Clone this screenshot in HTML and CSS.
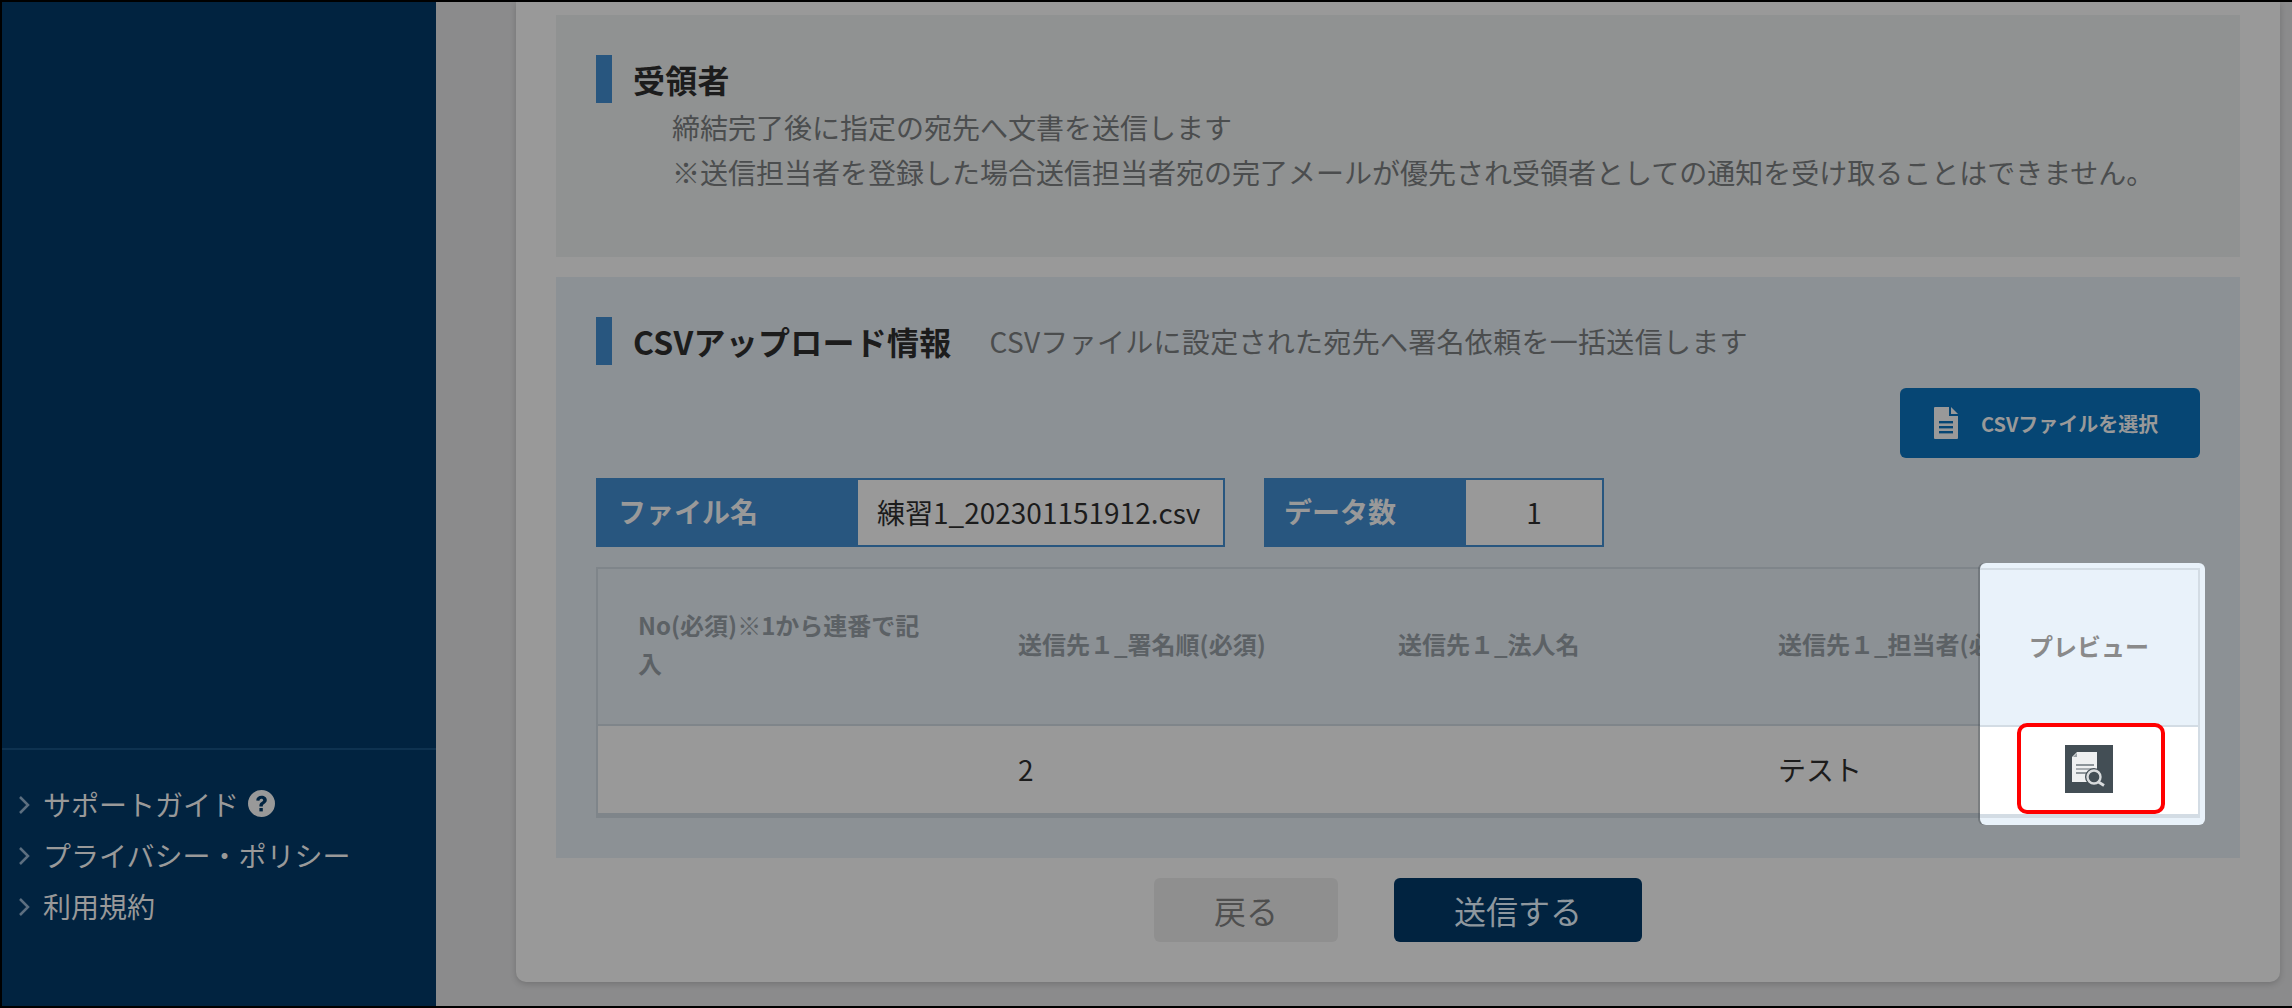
FILE: index.html
```html
<!DOCTYPE html>
<html lang="ja">
<head>
<meta charset="utf-8">
<title>CSVアップロード</title>
<link rel="stylesheet" href="styles.css">
</head>
<body>
<div class="app">
  <aside class="sidebar">
    <ul class="side-links">
      <li><svg class="chev" viewBox="0 0 12 18"><path d="M2 1l8 8-8 8"/></svg>サポートガイド<svg class="help" viewBox="0 0 27 27"><circle cx="13.5" cy="13.5" r="13.5"/><path class="help-q" d="M8.200 10.400c.3-3.200 2.500-4.700 5.400-4.700 3 0 5.200 1.800 5.200 4.400 0 3.600-4 3.600-4 5.900v.6h-3.400v-.9c0-3.500 3.800-3.700 3.800-5.400 0-.9-.8-1.500-1.800-1.500-1.100 0-1.800.8-2 2z"/><rect class="help-q" x="11.400" y="18" width="3.400" height="3.400"/></svg></li>
      <li><svg class="chev" viewBox="0 0 12 18"><path d="M2 1l8 8-8 8"/></svg>プライバシー・ポリシー</li>
      <li><svg class="chev" viewBox="0 0 12 18"><path d="M2 1l8 8-8 8"/></svg>利用規約</li>
    </ul>
  </aside>
  <main class="main">
    <div class="card">
      <section class="panel panel-plain">
        <h2 class="heading"><span class="heading-text">受領者</span></h2>
        <div class="notes">
          <p>締結完了後に指定の宛先へ文書を送信します</p>
          <p>※送信担当者を登録した場合送信担当者宛の完了メールが優先され受領者としての通知を受け取ることはできません。</p>
        </div>
      </section>
      <section class="panel panel-blue">
        <h2 class="heading"><span class="heading-text">CSVアップロード情報</span><span class="heading-desc">CSVファイルに設定された宛先へ署名依頼を一括送信します</span></h2>
        <div class="select-row">
          <button class="select-btn" type="button">
            <svg class="doc-icon" viewBox="0 0 24 32"><path d="M1 0h14v9h9v22a1 1 0 0 1-1 1H1a1 1 0 0 1-1-1V1a1 1 0 0 1 1-1z"/><path d="M17 0l7 7h-7z"/><rect class="doc-line" x="5" y="14" width="14" height="2.4"/><rect class="doc-line" x="5" y="19" width="14" height="2.4"/><rect class="doc-line" x="5" y="24" width="14" height="2.4"/></svg>
            CSVファイルを選択
          </button>
        </div>
        <div class="info-row">
          <dl class="info info-file"><dt>ファイル名</dt><dd>練習1_202301151912.csv</dd></dl>
          <dl class="info info-count"><dt>データ数</dt><dd>1</dd></dl>
        </div>
        <div class="table-wrap">
          <table class="data">
            <thead>
              <tr><th>No(必須)※1から連番で記入</th><th>送信先１_署名順(必須)</th><th>送信先１_法人名</th><th>送信先１_担当者(必須)</th><th></th></tr>
            </thead>
            <tbody>
              <tr><td></td><td>2</td><td></td><td>テスト</td><td></td></tr>
            </tbody>
          </table>
          <div class="spot">
            <div class="spot-inner">
              <div class="spot-head">プレビュー</div>
              <div class="spot-cell">
                <span class="red-box">
                  <svg class="preview-icon" viewBox="0 0 48 48">
                    <rect width="48" height="48" fill="#434e55"/>
                    <path fill="#eef0f1" d="M7 12l5-5h20v30H7z"/>
                    <path fill="#9aa1a6" d="M12 8v4H8z"/>
                    <rect x="11" y="19" width="18" height="2" fill="#8d959a"/>
                    <rect x="11" y="23" width="18" height="2" fill="#a9aeb2"/>
                    <rect x="11" y="27" width="12" height="2" fill="#8d959a"/>
                    <circle cx="29" cy="32" r="9" fill="#434e55"/>
                    <circle cx="29" cy="32" r="6.500" fill="#434e55" stroke="#d8dbdd" stroke-width="2.400"/>
                    <path d="M33.500 37l5.500 3.500" stroke="#d8dbdd" stroke-width="2.800" fill="none"/>
                  </svg>
                </span>
              </div>
            </div>
          </div>
        </div>
      </section>
      <div class="actions">
        <button class="btn btn-back" type="button">戻る</button>
        <button class="btn btn-send" type="button">送信する</button>
      </div>
    </div>
  </main>
</div>
</body>
</html>
```
FILE: styles.css
```css
* { box-sizing: border-box; }
html, body { margin: 0; height: 100%; }
body {
  background: #000;
  font-family: "Noto Sans CJK JP", "Noto Sans", sans-serif;
  color: #1c1c1c;
  overflow: hidden;
}
.app {
  display: flex;
  height: 1008px;
  border: 2px solid #000;
  border-right-width: 0;
  background: #8b8b8c;
  overflow: hidden;
}
.sidebar {
  flex: 0 0 434px;
  display: flex;
  flex-direction: column;
  justify-content: flex-end;
  background: #012340;
}
.side-links {
  list-style: none;
  margin: 0;
  padding: 29px 0 74px 16px;
  border-top: 2px solid #0e3250;
  color: #999;
  font-size: 28px;
  line-height: 51px;
}
.side-links li { display: flex; align-items: center; height: 51px; white-space: nowrap; }
.chev { width: 12px; height: 18px; margin-right: 13px; flex: none; }
.chev path { fill: none; stroke: #5d6f80; stroke-width: 2.500; }
.help { width: 27px; height: 27px; margin-left: 9px; margin-top: -2px; fill: #999; }
.help-q { fill: #012340; }

.main { flex: 1; padding-left: 80px; padding-right: 12px; min-width: 0; }
.card {
  height: 980px;
  background: #999;
  padding: 13px 40px 0;
  border-radius: 0 0 10px 10px;
  box-shadow: 0 2px 6px rgba(0,0,0,.18);
}
.panel { padding: 40px 40px 0; }
.panel-plain { height: 242px; background: #909292; }
.panel-blue { height: 581px; margin-top: 20px; background: #8c9195; }

.heading {
  display: flex;
  align-items: center;
  height: 48px;
  margin: 0;
  padding-left: 21px;
  border-left: 16px solid #28567f;
  font-size: 32px;
  font-weight: 700;
  line-height: 48px;
  white-space: nowrap;
}
.heading-text { letter-spacing: .25px; }
.heading-desc { margin-left: 38px; font-size: 28px; font-weight: 400; letter-spacing: .3px; color: #4b4d4e; }
.notes { padding-left: 76px; padding-top: 2px; color: #4b4d4e; font-size: 28px; line-height: 45px; white-space: nowrap; }
.notes p { margin: 0; }

.select-row { display: flex; justify-content: flex-end; margin-top: 23px; }
.select-btn {
  display: flex;
  align-items: center;
  width: 300px;
  height: 70px;
  padding: 0 0 0 34px;
  border: 0;
  border-radius: 6px;
  background: #064674;
  color: #999;
  font-family: inherit;
  font-size: 20px;
  font-weight: 700;
  white-space: nowrap;
}
.doc-icon { width: 24px; height: 32px; margin-right: 23px; fill: #999; flex: none; }
.doc-line { fill: #064674; }

.info-row { display: flex; gap: 39px; margin-top: 20px; }
.info { display: flex; margin: 0; height: 69px; border: 2px solid #28567f; }
.info dt {
  display: flex;
  align-items: center;
  padding-bottom: 4px;
  background: #28567f;
  color: #999;
  font-size: 28px;
  font-weight: 700;
  white-space: nowrap;
}
.info dd {
  display: flex;
  align-items: center;
  margin: 0;
  padding-bottom: 2px;
  background: #999;
  font-size: 28px;
  white-space: nowrap;
}
.info-file { width: 629px; }
.info-file dt { width: 260px; padding-left: 20px; }
.info-file dd { flex: 1; padding-left: 19px; }
.info-count { width: 340px; }
.info-count dt { width: 200px; padding-left: 18px; }
.info-count dd { flex: 1; justify-content: center; }

.table-wrap { position: relative; margin-top: 20px; }
.data {
  width: 100%;
  table-layout: fixed;
  border-collapse: separate;
  border-spacing: 0;
  border: 2px solid #7f858a;
  border-bottom-width: 5px;
}
.data th:nth-child(-n+4), .data td:nth-child(-n+4) { width: 380px; }
.data th {
  height: 157px;
  padding: 0 40px 5px;
  border-bottom: 2px solid #7f858a;
  color: #5c6165;
  font-size: 24px;
  font-weight: 700;
  line-height: 38px;
  text-align: left;
  white-space: normal;
  overflow: hidden;
}
.data th:nth-child(4) { white-space: nowrap; overflow: visible; }
.data td {
  height: 87px;
  padding: 0 40px 2px;
  background: #999;
  font-size: 28px;
}
.spot {
  position: absolute;
  top: -4px;
  right: -5px;
  bottom: -7px;
  width: 225px;
  padding: 5px 5px 7px 0;
  border-radius: 6px;
  background: #e9f2fa;
  box-shadow: -2px 0 0 rgba(70,78,84,.35);
}
.spot-inner {
  height: 100%;
  display: flex;
  flex-direction: column;
  border: 2px solid #d3dce4;
  border-left: 0;
  border-bottom-width: 4px;
}
.spot-head {
  flex: none;
  display: flex;
  align-items: center;
  justify-content: center;
  height: 157px;
  padding-bottom: 5px;
  border-bottom: 2px solid #d3dce4;
  color: #8a8a8a;
  font-size: 24px;
  font-weight: 700;
}
.spot-cell { flex: 1; display: flex; align-items: stretch; justify-content: center; background: #fff; position: relative; }
.red-box {
  display: flex;
  align-items: center;
  justify-content: center;
  width: 148px;
  margin: -4px 0 0 4px;
  padding-right: 4px;
  border: 4px solid #f00;
  border-radius: 10px;
}
.preview-icon { width: 48px; height: 48px; display: block; }

.actions { display: flex; justify-content: center; gap: 56px; margin-top: 20px; padding-right: 0; }
.btn {
  height: 64px;
  border: 0;
  border-radius: 6px;
  font-family: inherit;
  font-size: 32px;
}
.btn-back { width: 184px; background: #8f8f8f; color: #4f4f4f; }
.btn-send { width: 248px; background: #012340; color: #8e979e; }
```
